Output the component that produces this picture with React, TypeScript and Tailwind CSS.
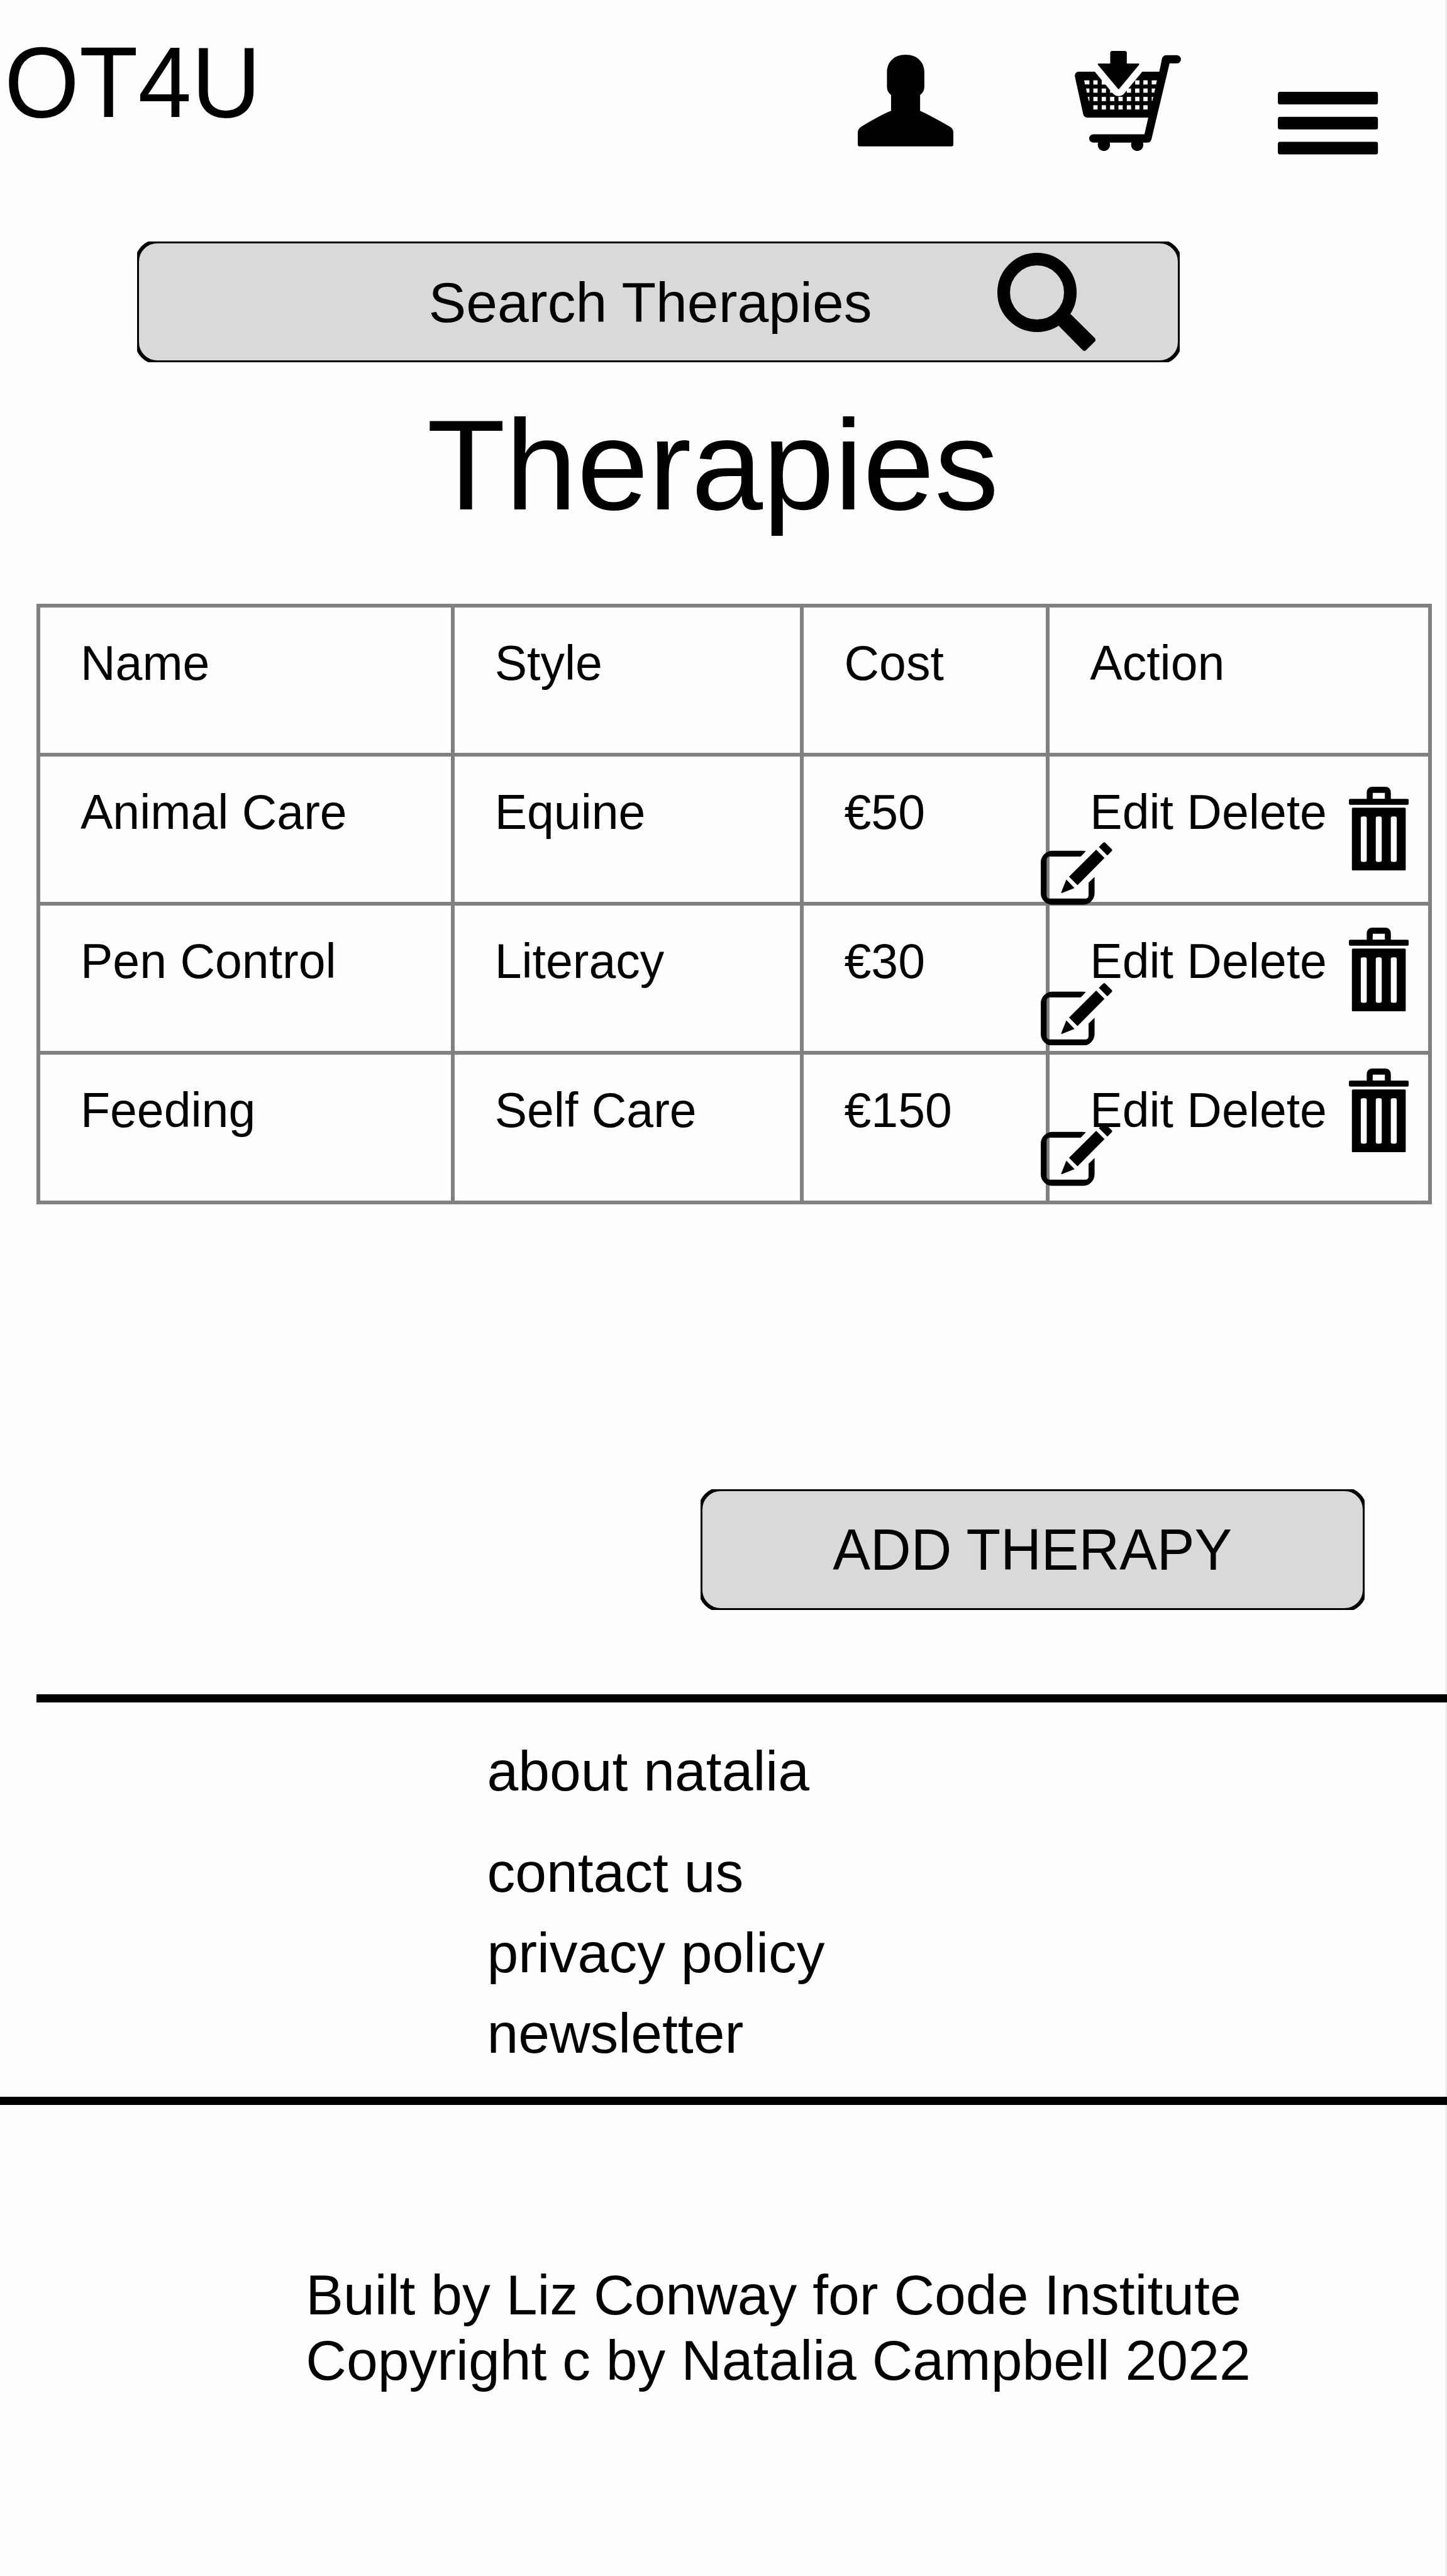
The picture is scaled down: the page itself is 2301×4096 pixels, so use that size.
import React from "react";

const CART_HOLES: [number, number][] = [
  [208, 237], [261, 237], [473, 237], [525, 237],
  [208, 289], [261, 289], [314, 289], [420, 289], [473, 289], [525, 289],
  [208, 342], [261, 342], [314, 342], [367, 342], [420, 342], [473, 342], [525, 342],
  [208, 395], [261, 395], [314, 395], [367, 395], [420, 395], [473, 395], [525, 395],
];

function PersonIcon({ className }: { className: string }) {
  return (
    <svg className={className} viewBox="96 78 606 581" preserveAspectRatio="none">
      <path d="M281 190C281 125 325 78 399 78S518 125 518 190V280Q518 314 491 333V434Q540 455 680 534Q702 547 702 575V647Q702 659 690 659H108Q96 659 96 647V575Q96 547 118 534Q250 455 307 434V333Q281 314 281 280Z" />
    </svg>
  );
}

function CartIcon({ className }: { className: string }) {
  return (
    <svg className={className} viewBox="90 51 673 634" preserveAspectRatio="none">
      <path d="M116 183H217L328 316Q345 337 368 337Q392 337 408 316L518 183H626L643 100Q649 78 671 78H737a26 26 0 0 1 0 52H691L576 612Q570 632 550 632H208a26 26 0 0 1 0 -53H532L556 473H168Q148 470 144 452L91 213Q89 185 116 183Z" />
      <circle cx="275" cy="646" r="39" />
      <circle cx="486" cy="646" r="39" />
      <g fill="#fefefe">
        {CART_HOLES.map(([x, y]) => (
          <rect key={`${x}-${y}`} x={x} y={y} width="27" height="27" />
        ))}
        <path d="M150 237H183V263H155ZM162 289H183V315H167ZM173 342H183V368H179ZM578 237H611L605 263H578ZM578 289H600L594 315H578ZM578 342H588L582 368H578Z" />
      </g>
      <path d="M327 51H408Q420 51 420 63V131H496Q500 133 498 139L371 292Q368 295 365 292L237 139Q235 133 240 131H315V63Q315 51 327 51Z" />
    </svg>
  );
}

function MenuIcon({ className }: { className: string }) {
  return (
    <svg className={className} viewBox="0 0 634 397" preserveAspectRatio="none">
      <rect width="634" height="80" rx="13" />
      <rect y="158.5" width="634" height="80" rx="13" />
      <rect y="317" width="634" height="80" rx="13" />
    </svg>
  );
}

function SearchIcon({ className }: { className: string }) {
  return (
    <svg className={className} viewBox="139 102 622 622">
      <circle cx="390" cy="353" r="211" fill="none" stroke="black" strokeWidth="80" />
      <path d="M602 489L757 643Q765 655 757 663L700 719Q690 727 680 719L527 564L540 500Z" />
    </svg>
  );
}

function EditIcon({ className }: { className: string }) {
  return (
    <svg className={className} viewBox="24 26 453 397" preserveAspectRatio="none">
      <path d="M310 84Q300 81 290 81H98A74 74 0 0 0 24 155V349A74 74 0 0 0 98 423H291A74 74 0 0 0 365 349V246L327 283V362Q327 384 305 384H83Q61 384 61 362V140Q61 118 83 118H277Z" />
      <path d="M375 74L428 127L257 299L203 245Z" />
      <path d="M392 57L418 31Q425 23 433 30L473 70Q480 77 473 84L446 111Z" />
      <path d="M186 263L238 317L158 349Q152 349 154 343Z" />
    </svg>
  );
}

function TrashIcon({ className }: { className: string }) {
  return (
    <svg className={className} viewBox="0 0 126.3 177" preserveAspectRatio="none">
      <path
        fillRule="evenodd"
        d="M37.7 27V13Q37.7 0 50.3 0H76Q88.6 0 88.6 13V27ZM50.3 13V25.7H76V13Z"
      />
      <rect y="25.7" width="126.3" height="12.6" rx="3" />
      <rect x="6.3" y="44.3" width="113.7" height="132.7" rx="2.5" />
      <g fill="#fefefe">
        <rect x="25.1" y="62.7" width="12.6" height="96" rx="4" />
        <rect x="56.8" y="62.7" width="12.6" height="96" rx="4" />
        <rect x="88.5" y="62.7" width="12.6" height="96" rx="4" />
      </g>
    </svg>
  );
}

const ROWS = [
  ["Name", "Style", "Cost", "Action"],
  ["Animal Care", "Equine", "€50", "Edit Delete"],
  ["Pen Control", "Literacy", "€30", "Edit Delete"],
  ["Feeding", "Self Care", "€150", "Edit Delete"],
];

export default function App() {
  return (
    <div className="relative flex h-[4096px] w-[2301px] flex-col items-start overflow-hidden bg-[#fefefe] font-['Liberation_Sans',Arial,sans-serif] text-[89.5px] leading-none text-black">
      <div className="absolute inset-y-0 right-0 w-[3px] bg-[#ededed]" />

      <header className="flex h-[384px] w-full shrink-0 items-start">
        <div className="w-[1364.4px] shrink-0 scale-y-[1.04] pl-[7px] pt-[55.6px] text-[153px] [transform-origin:0_185px]">
          OT4U
        </div>
        <PersonIcon className="mt-[87.3px] h-[145.8px] w-[152.1px] shrink-0" />
        <CartIcon className="ml-[192.7px] mt-[80.6px] h-[159.1px] w-[168.9px] shrink-0" />
        <MenuIcon className="ml-[154.3px] mt-[146.1px] h-[99.6px] w-[159.2px] shrink-0" />
      </header>

      <div className="ml-[217.6px] h-[192px] w-[1658px] shrink-0 overflow-hidden">
        <div className="-m-[3px] flex h-[198px] w-[1664px] items-start rounded-[35px] border-[6px] border-black bg-[#d9d9d9]">
          <div className="w-[1365.3px] shrink-0 whitespace-nowrap pl-[461px] pt-[49.6px]">
            Search Therapies
          </div>
          <SearchIcon className="mt-[14.8px] size-[156.2px] shrink-0" />
        </div>
      </div>

      <h1 className="ml-[678.8px] mt-[61.1px] shrink-0 text-[204.5px] leading-none">Therapies</h1>

      <div className="relative ml-[58px] mt-[118.4px] shrink-0">
        <div className="grid grid-cols-[652.7px_549.8px_384.8px_601.6px] grid-rows-[repeat(4,231.17px)] gap-[6px] bg-[#808080] p-[6px] text-[77px] leading-none">
          {ROWS.flatMap((row, r) =>
            row.map((cell, c) => (
              <div key={`${r}-${c}`} className="whitespace-nowrap bg-[#fefefe] pl-[64px] pt-[50px]">
                {cell}
              </div>
            )),
          )}
        </div>
        <div className="absolute left-[1597.1px] top-[379.3px] flex flex-col gap-[124px]">
          {[0, 1, 2].map((i) => (
            <EditIcon key={i} className="h-[99.6px] w-[113.7px]" />
          ))}
        </div>
        <div className="absolute left-[2086.9px] top-[290.6px] flex flex-col gap-[90.8px]">
          {[0, 1, 2].map((i) => (
            <TrashIcon key={i} className="h-[133.3px] w-[95.1px]" />
          ))}
        </div>
      </div>

      <div className="ml-[1113.8px] mt-[453.3px] h-[192px] w-[1056px] shrink-0 overflow-hidden">
        <div className="-m-[3px] flex h-[198px] w-[1062px] justify-center rounded-[35px] border-[6px] border-black bg-[#d9d9d9] pt-[50px]">
          <span className="h-[89px] scale-y-[1.04] whitespace-nowrap [transform-origin:0_76px]">ADD THERAPY</span>
        </div>
      </div>

      <div className="relative ml-[58px] mt-[134.4px] h-[13px] w-[2243px] shrink-0 bg-black" />

      <nav className="ml-[774.4px] flex shrink-0 flex-col pt-[65.2px]">
        <a>about natalia</a>
        <a className="mt-[71.2px]">contact us</a>
        <a className="mt-[38.1px]">privacy policy</a>
        <a className="mt-[38.4px]">newsletter</a>
      </nav>

      <div className="relative mt-[55.8px] h-[13.4px] w-full shrink-0 bg-black" />

      <footer className="ml-[486.3px] mt-[249.6px] shrink-0 whitespace-nowrap leading-[104px]">
        <p>Built by Liz Conway for Code Institute</p>
        <p>Copyright c by Natalia Campbell 2022</p>
      </footer>
    </div>
  );
}
